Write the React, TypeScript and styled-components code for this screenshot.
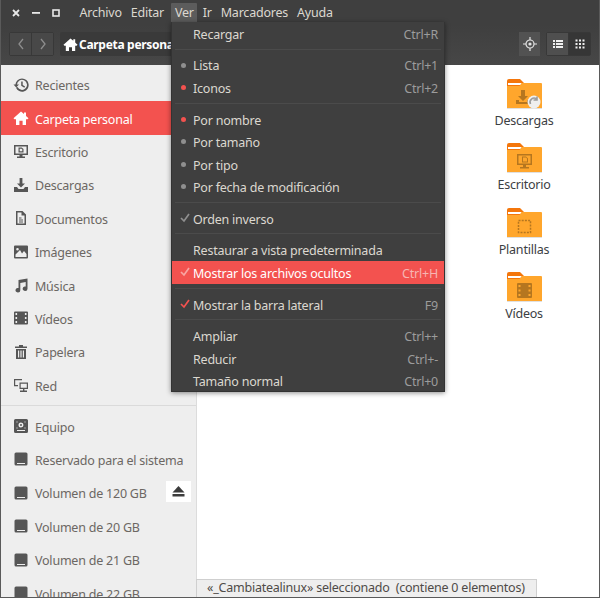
import React from 'react';
import styled, { createGlobalStyle } from 'styled-components';

const GlobalStyle = createGlobalStyle`
  html, body {
    margin: 0;
    padding: 0;
    background: #fff;
  }
  body {
    font-family: "Noto Sans", "Open Sans", sans-serif;
    font-size: 12.5px;
    letter-spacing: -0.22px;
  }
`;

const ACCENT = '#f3524f';

// Window shell
const Window = styled.div`
  position: relative;
  width: 600px;
  height: 598px;
  box-sizing: border-box;
  border: 1px solid #5a5a5a;
  border-top: none;
  overflow: hidden;
  display: flex;
  flex-direction: column;
  background: #fff;
`;

const MenuBar = styled.div`
  display: flex;
  align-items: center;
  height: 25px;
  flex-shrink: 0;
  background: #3f3f3f;
  color: #dcd8d0;
`;

const WindowControls = styled.div`
  display: flex;
  align-items: center;
  gap: 10px;
  padding-left: 10px;
  width: 74px;
  box-sizing: border-box;
  svg {
    display: block;
  }
`;

const MenuTitle = styled.div<{ $open?: boolean }>`
  padding: 0 ${p => (p.$open ? 3.5 : 4.5)}px;
  height: 19px;
  margin: ${p => (p.$open ? '0 1px 0 3px' : '0')};
  line-height: 20px;
  background: ${p => (p.$open ? '#5c5c5c' : 'transparent')};
  border-radius: 1px 1px 0 0;
`;

const Toolbar = styled.div`
  display: flex;
  align-items: center;
  height: 40px;
  flex-shrink: 0;
  padding: 0 8px 2px 8px;
  box-sizing: border-box;
  background: linear-gradient(#3f3f3f, #474747);
`;

const ButtonGroup = styled.div`
  display: flex;
  border: 1px solid #383838;
  border-radius: 2px;
  height: 24px;
  box-sizing: border-box;
`;

const ToolButton = styled.div<{ $active?: boolean; $plain?: boolean }>`
  display: flex;
  align-items: center;
  justify-content: center;
  width: 21px;
  background: ${p => (p.$active ? '#363636' : p.$plain ? '#4f4f4f' : '#484848')};
  & + & {
    border-left: 1px solid #383838;
  }
`;

const PathBar = styled.div`
  display: flex;
  align-items: center;
  gap: 1px;
  margin-left: 6px;
  width: 200px;
  height: 24px;
  padding-left: 3px;
  box-sizing: border-box;
  background: #3a3a3a;
  border-radius: 2px;
  color: #fff;
  font-weight: 700;
  font-size: 12px;
  letter-spacing: -0.3px;
  white-space: nowrap;
  overflow: hidden;
`;

const Spacer = styled.div`
  flex: 1;
`;

const LocateButton = styled.div`
  display: flex;
  align-items: center;
  justify-content: center;
  width: 21px;
  height: 24px;
  margin-right: 6px;
  background: #525252;
`;

// Body
const Body = styled.div`
  flex: 1;
  display: flex;
  min-height: 0;
`;

const Sidebar = styled.div`
  width: 195px;
  flex-shrink: 0;
  background: #eeeeee;
  border-right: 1px solid #dcdcdc;
  box-sizing: content-box;
  padding-top: 3px;
  color: #6c6763;
  overflow: hidden;
`;

const SideRow = styled.div<{ $selected?: boolean }>`
  position: relative;
  display: flex;
  align-items: center;
  height: 33.4px;
  padding-left: 12px;
  gap: 6px;
  flex-shrink: 0;
  white-space: nowrap;
  color: ${p => (p.$selected ? '#ffffff' : 'inherit')};
  background: ${p => (p.$selected ? ACCENT : 'transparent')};
`;

const RowLabel = styled.span`
  padding-top: 2px;
`;

const SideIcon = styled.svg<{ $selected?: boolean }>`
  width: 16px;
  height: 16px;
  flex-shrink: 0;
  fill: ${p => (p.$selected ? '#ffffff' : '#565656')};
`;

const SideSep = styled.div`
  height: 1px;
  margin: 3px 0 3.5px;
  background: #dadada;
`;

const EjectButton = styled.div`
  position: absolute;
  right: 5px;
  top: 5px;
  width: 25px;
  height: 21px;
  background: #fff;
  display: flex;
  align-items: center;
  justify-content: center;
  color: #3c3c3c;
`;

const Main = styled.div`
  flex: 1;
  display: flex;
  flex-direction: column;
  align-items: flex-end;
  padding: 13px 30px 0 0;
  background: #fff;
`;

const FileItem = styled.div`
  width: 90px;
  height: 64.3px;
  display: flex;
  flex-direction: column;
  align-items: center;
  color: #3c4043;
`;

const FolderIcon = styled.svg`
  width: 36px;
  height: 31px;
  flex-shrink: 0;
`;

const FileLabel = styled.div`
  margin-top: 3px;
  line-height: 18px;
`;

const StatusBar = styled.div`
  position: absolute;
  left: 195px;
  bottom: 0;
  width: 341px;
  height: 18px;
  box-sizing: border-box;
  padding-left: 10px;
  background: #eeeeee;
  border: 1px solid #cfcfcf;
  border-bottom: none;
  color: #4f4b48;
  line-height: 16px;
  white-space: pre;
`;

// Open "Ver" menu
const Menu = styled.div`
  position: absolute;
  left: 170px;
  top: 22px;
  width: 274px;
  height: 370px;
  background: #3f3f3f;
  border: 1px solid #333;
  border-top: none;
  box-sizing: border-box;
  box-shadow: 0 1px 5px rgba(0, 0, 0, 0.45);
  color: #dcd8d0;
  overflow: hidden;
`;

const MenuRow = styled.div<{ $hot?: boolean }>`
  position: relative;
  display: flex;
  align-items: center;
  justify-content: space-between;
  height: 22.5px;
  padding: 0 6px 0 21px;
  background: ${p => (p.$hot ? ACCENT : 'transparent')};
  color: ${p => (p.$hot ? '#fff' : 'inherit')};
`;

const MenuSep = styled.div`
  height: 1px;
  margin: 4px 3px 4.17px;
  background: #4b4b4b;
`;

const Shortcut = styled(RowLabel)<{ $hot?: boolean }>`
  color: ${p => (p.$hot ? '#f7b5b2' : '#9c9c9c')};
`;

const Bullet = styled.span<{ $on?: boolean }>`
  position: absolute;
  left: 9px;
  top: 9px;
  width: 5px;
  height: 5px;
  border-radius: 50%;
  background: ${p => (p.$on ? ACCENT : '#8f8f8f')};
`;

const Check = styled.svg<{ $color: string }>`
  position: absolute;
  left: 8px;
  top: 6px;
  width: 10px;
  height: 10px;
  fill: none;
  stroke: ${p => p.$color};
  stroke-width: 1.7;
`;

const ICONS: Record<string, React.ReactNode> = {
  recent: (
    <path
      fillRule="evenodd"
      d="M9 1.5a6.6 6.6 0 1 1-6 9.2l1.5-.6A5 5 0 1 0 4 7.5h2L3.2 10.6.5 7.5h1.9A6.6 6.6 0 0 1 9 1.5zM8.2 4.5h1.5v3.6l2.4 1.5-.8 1.2-3.1-2z"
    />
  ),
  home: <path d="M8 1.5l3 2.6V2.5h2v3.4l2.5 2.3-1 1H13V15h-3.4v-4.2H6.4V15H3V9.2H1.5l-1-1z" />,
  desktop: (
    <path
      fillRule="evenodd"
      d="M1 2h14v10H9.5v1.5H12V15H4v-1.5h2.5V12H1zm1.5 1.5v7h11v-7zM5.5 4.5h3.2L10.5 6v3.5h-5zm1.2 1.2v2.6h2.6V6.5l-.8-.8z"
    />
  ),
  download: <path d="M6.6 1h2.8v5.5H12L8 10.5 4 6.5h2.6zM1 10h3l1.5 2h5L12 10h3v5H1z" />,
  document: (
    <path
      fillRule="evenodd"
      d="M3 1h6.5L13 4.5V15H3zm1.5 1.5v11h7V5.5H8.5v-3zM6 7.5h2.5v1H6zm0 2h4v1H6zm0 2h4v1H6z"
    />
  ),
  image: (
    <path
      fillRule="evenodd"
      d="M2 1.5h12a1 1 0 0 1 1 1v11a1 1 0 0 1-1 1H2a1 1 0 0 1-1-1v-11a1 1 0 0 1 1-1zM2.5 10.5v2.5h11v-3l-2.5-3-2 2.5-2-3.5zM4.5 4a1.3 1.3 0 1 0 0 2.6 1.3 1.3 0 0 0 0-2.6z"
    />
  ),
  music: (
    <path d="M5.5 3l9-1.5v10.2a2.4 2.2 0 1 1-1.8-2.1V5L7.3 6v7.2a2.4 2.2 0 1 1-1.8-2.1z" />
  ),
  video: (
    <path
      fillRule="evenodd"
      d="M2 1.5h12a1 1 0 0 1 1 1v11a1 1 0 0 1-1 1H2a1 1 0 0 1-1-1v-11a1 1 0 0 1 1-1zM2.5 3v2h1.6V3zm0 4v2h1.6V7zm0 4v2h1.6v-2zm9.4-8v2h1.6V3zm0 4v2h1.6V7zm0 4v2h1.6v-2z"
    />
  ),
  trash: (
    <path
      fillRule="evenodd"
      d="M6 1h4v1.5h4V4H2V2.5h4zM3 5h10v10H3zm2 1.5v7h1.2v-7zm2.4 0v7h1.2v-7zm2.4 0v7H11v-7z"
    />
  ),
  network: (
    <path
      fillRule="evenodd"
      d="M1 2h8v1.2H2.2V8H5v1.2H1zM6.5 5.500H15V12h-3.600v1.500H14V15H7v-1.500h3V12H6.500zm1.200 1.200v4.100h6.100V6.700z"
    />
  ),
  computer: (
    <path
      fillRule="evenodd"
      d="M2.5 1h11A1.5 1.5 0 0 1 15 2.5v11a1.5 1.5 0 0 1-1.5 1.5h-11A1.5 1.5 0 0 1 1 13.5v-11A1.5 1.5 0 0 1 2.5 1zM4 12v1h8v-1zM8 4.5A2.5 2.5 0 1 0 8 9.5 2.5 2.5 0 0 0 8 4.5zM8 6a1 1 0 1 1 0 2 1 1 0 0 1 0-2zM3.5 3.5v1h1v-1zm8 0v1h1v-1zm-8 6v1h1v-1zm8 0v1h1v-1z"
    />
  ),
  drive: (
    <path
      fillRule="evenodd"
      d="M3 1.5h10A1.5 1.5 0 0 1 14.5 3v10a1.5 1.5 0 0 1-1.5 1.5H3A1.5 1.5 0 0 1 1.5 13V3A1.5 1.5 0 0 1 3 1.5zM4 12v1h8v-1z"
    />
  ),
};

const places = [
  { icon: 'recent', label: 'Recientes' },
  { icon: 'home', label: 'Carpeta personal', selected: true },
  { icon: 'desktop', label: 'Escritorio' },
  { icon: 'download', label: 'Descargas' },
  { icon: 'document', label: 'Documentos' },
  { icon: 'image', label: 'Imágenes' },
  { icon: 'music', label: 'Música' },
  { icon: 'video', label: 'Vídeos' },
  { icon: 'trash', label: 'Papelera' },
  { icon: 'network', label: 'Red' },
];

const devices = [
  { icon: 'computer', label: 'Equipo' },
  { icon: 'drive', label: 'Reservado para el sistema' },
  { icon: 'drive', label: 'Volumen de 120 GB', eject: true },
  { icon: 'drive', label: 'Volumen de 20 GB' },
  { icon: 'drive', label: 'Volumen de 21 GB' },
  { icon: 'drive', label: 'Volumen de 22 GB' },
];

type MenuEntry =
  | 'sep'
  | {
      label: string;
      keys?: string;
      bullet?: 'on' | 'off';
      check?: 'grey' | 'red' | 'pale';
      hot?: boolean;
    };

const menuEntries: MenuEntry[] = [
  { label: 'Recargar', keys: 'Ctrl+R' },
  'sep',
  { label: 'Lista', keys: 'Ctrl+1', bullet: 'off' },
  { label: 'Iconos', keys: 'Ctrl+2', bullet: 'on' },
  'sep',
  { label: 'Por nombre', bullet: 'on' },
  { label: 'Por tamaño', bullet: 'off' },
  { label: 'Por tipo', bullet: 'off' },
  { label: 'Por fecha de modificación', bullet: 'off' },
  'sep',
  { label: 'Orden inverso', check: 'grey' },
  'sep',
  { label: 'Restaurar a vista predeterminada' },
  { label: 'Mostrar los archivos ocultos', keys: 'Ctrl+H', check: 'pale', hot: true },
  'sep',
  { label: 'Mostrar la barra lateral', keys: 'F9', check: 'red' },
  'sep',
  { label: 'Ampliar', keys: 'Ctrl++' },
  { label: 'Reducir', keys: 'Ctrl+-' },
  { label: 'Tamaño normal', keys: 'Ctrl+0' },
];

const checkColors = { grey: '#8f8f8f', red: ACCENT, pale: '#f8a5a2' };

const Folder: React.FC<{ children?: React.ReactNode }> = ({ children }) => (
  <FolderIcon viewBox="0 0 36 31">
    <path d="M1 3a2 2 0 0 1 2-2h11l4 4v6H1z" fill="#f4760b" />
    <rect x="2" y="5" width="16" height="2" fill="#fff" />
    <path d="M1 8h12.5l2-3H35a1 1 0 0 1 1 1v24H1z" fill="#ffa62c" />
    <rect x="1" y="30" width="35" height="1" fill="#e0e0e0" />
    {children}
  </FolderIcon>
);

const folderMark = '#b5761f';

const App: React.FC = () => (
  <Window>
    <GlobalStyle />

    <MenuBar>
      <WindowControls>
        <svg width="10" height="10" viewBox="0 0 10 10">
          <path d="M2 2l6 6M8 2l-6 6" stroke="#e8e8e8" strokeWidth="1.8" />
        </svg>
        <svg width="10" height="10" viewBox="0 0 10 10">
          <rect x="1" y="4" width="8" height="1.8" fill="#e8e8e8" />
        </svg>
        <svg width="10" height="10" viewBox="0 0 10 10">
          <rect x="2" y="2" width="6" height="6" fill="none" stroke="#e8e8e8" strokeWidth="1.6" />
        </svg>
      </WindowControls>
      <MenuTitle>Archivo</MenuTitle>
      <MenuTitle>Editar</MenuTitle>
      <MenuTitle $open>Ver</MenuTitle>
      <MenuTitle>Ir</MenuTitle>
      <MenuTitle>Marcadores</MenuTitle>
      <MenuTitle>Ayuda</MenuTitle>
    </MenuBar>

    <Toolbar>
      <ButtonGroup>
        <ToolButton>
          <svg width="10" height="14" viewBox="0 0 10 14">
            <path d="M7 2L3 7l4 5" fill="none" stroke="#8d8d8d" strokeWidth="1.3" />
          </svg>
        </ToolButton>
        <ToolButton>
          <svg width="10" height="14" viewBox="0 0 10 14">
            <path d="M3 2l4 5-4 5" fill="none" stroke="#8d8d8d" strokeWidth="1.3" />
          </svg>
        </ToolButton>
      </ButtonGroup>
      <PathBar>
        <svg width="15" height="15" viewBox="0 0 16 16" fill="#fff">
          {ICONS.home}
        </svg>
        Carpeta personal
      </PathBar>
      <Spacer />
      <LocateButton>
        <svg width="14" height="14" viewBox="0 0 14 14" fill="none" stroke="#e4e4e4">
          <circle cx="7" cy="7" r="4" strokeWidth="1.2" />
          <circle cx="7" cy="7" r="1.6" fill="#e4e4e4" stroke="none" />
          <path d="M7 0v3M7 11v3M0 7h3M11 7h3" strokeWidth="1.2" />
        </svg>
      </LocateButton>
      <ButtonGroup>
        <ToolButton $plain>
          <svg width="10" height="10" viewBox="0 0 10 10" fill="#eee">
            <rect x="0" y="1" width="2" height="2" />
            <rect x="3" y="1" width="7" height="2" />
            <rect x="0" y="4" width="2" height="2" />
            <rect x="3" y="4" width="7" height="2" />
            <rect x="0" y="7" width="2" height="2" />
            <rect x="3" y="7" width="7" height="2" />
          </svg>
        </ToolButton>
        <ToolButton $active>
          <svg width="10" height="10" viewBox="0 0 10 10" fill="#eee">
            {[0.5, 4, 7.5].flatMap(y =>
              [0.5, 4, 7.5].map(x => <rect key={`${x}-${y}`} x={x} y={y} width="2" height="2" />),
            )}
          </svg>
        </ToolButton>
      </ButtonGroup>
    </Toolbar>

    <Body>
      <Sidebar>
        {places.map(p => (
          <SideRow key={p.label} $selected={p.selected}>
            <SideIcon viewBox="0 0 16 16" $selected={p.selected}>
              {ICONS[p.icon]}
            </SideIcon>
            <RowLabel>{p.label}</RowLabel>
          </SideRow>
        ))}
        <SideSep />
        {devices.map(d => (
          <SideRow key={d.label}>
            <SideIcon viewBox="0 0 16 16">{ICONS[d.icon]}</SideIcon>
            <RowLabel>{d.label}</RowLabel>
            {d.eject && (
              <EjectButton>
                <svg width="13" height="11" viewBox="0 0 13 11" fill="currentColor">
                  <path d="M6.5 0l6 6.5H.5z" />
                  <rect x="0.5" y="8" width="12" height="2.5" />
                </svg>
              </EjectButton>
            )}
          </SideRow>
        ))}
      </Sidebar>

      <Main>
        <FileItem>
          <Folder>
            <path d="M15 12h4v6h3l-5 5-5-5h3zM10 22h3v2h8v-2h3v4H10z" fill={folderMark} />
            <circle cx="28" cy="24" r="6.5" fill="#efefef" />
            <path d="M24.5 26a4 4 0 0 1 6-5M31 18.5V22h-3.5" fill="none" stroke="#9c9c9c" strokeWidth="1.6" />
          </Folder>
          <FileLabel>Descargas</FileLabel>
        </FileItem>
        <FileItem>
          <Folder>
            <path
              fillRule="evenodd"
              d="M11 12h15v11h-6v2h3v1.5h-9V25h3v-2h-6zm1.5 1.5v8h12v-8zM16 14.5h4l2 2v4h-6zm1 1v4h4v-3l-1-1z"
              fill={folderMark}
            />
          </Folder>
          <FileLabel>Escritorio</FileLabel>
        </FileItem>
        <FileItem>
          <Folder>
            <rect x="12.5" y="13.5" width="12" height="12" fill="none" stroke={folderMark} strokeWidth="1.5" strokeDasharray="2 1.2" />
          </Folder>
          <FileLabel>Plantillas</FileLabel>
        </FileItem>
        <FileItem>
          <Folder>
            <path
              fillRule="evenodd"
              d="M12 12h13a1 1 0 0 1 1 1v13a1 1 0 0 1-1 1H12a1 1 0 0 1-1-1V13a1 1 0 0 1 1-1zm.5 2v2h2v-2zm0 4.5v2h2v-2zm0 4.5v2h2v-2zm10-9v2h2v-2zm0 4.5v2h2v-2zm0 4.5v2h2v-2z"
              fill={folderMark}
            />
          </Folder>
          <FileLabel>Vídeos</FileLabel>
        </FileItem>
      </Main>
    </Body>

    <StatusBar>«_Cambiatealinux» seleccionado  (contiene 0 elementos)</StatusBar>

    <Menu>
      {menuEntries.map((entry, i) =>
        entry === 'sep' ? (
          <MenuSep key={i} />
        ) : (
          <MenuRow key={entry.label} $hot={entry.hot}>
            {entry.bullet && <Bullet $on={entry.bullet === 'on'} />}
            {entry.check && (
              <Check $color={checkColors[entry.check]} viewBox="0 0 10 10">
                <path d="M1 5l3 3 5-7" />
              </Check>
            )}
            <RowLabel>{entry.label}</RowLabel>
            {entry.keys && <Shortcut $hot={entry.hot}>{entry.keys}</Shortcut>}
          </MenuRow>
        ),
      )}
    </Menu>
  </Window>
);

export default App;
